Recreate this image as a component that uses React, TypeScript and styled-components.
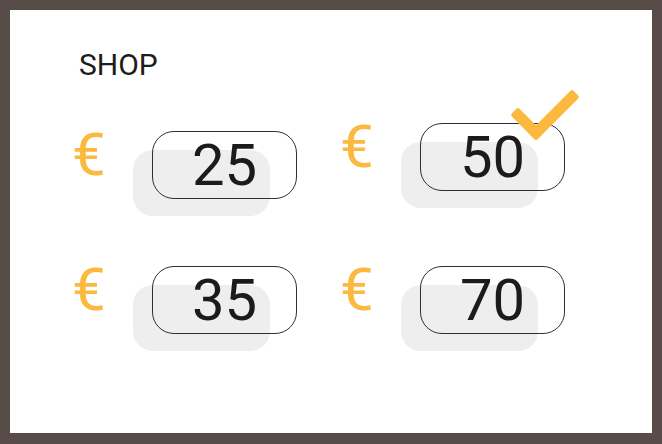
import React, { useState } from 'react';
import styled, { createGlobalStyle } from 'styled-components';

const GlobalStyle = createGlobalStyle`
  html, body {
    margin: 0;
    padding: 0;
    background: #574c48;
  }
  * {
    box-sizing: border-box;
  }
`;

const amounts = [25, 50, 35, 70];

const ShopPage = () => {
  const [selected, setSelected] = useState<number>(50);

  return (
    <Frame>
      <GlobalStyle />
      <Sheet>
        <Title>SHOP</Title>
        <Grid>
          {amounts.map((amount) => (
            <Cell key={amount} $selected={selected === amount} onClick={() => setSelected(amount)}>
              <Euro>€</Euro>
              <PillWrap>
                <Pill>{amount}</Pill>
                {selected === amount && <CheckMark />}
              </PillWrap>
            </Cell>
          ))}
        </Grid>
      </Sheet>
    </Frame>
  );
};

const CheckMark = () => (
  <CheckSvg width="80" height="60" viewBox="0 0 80 60">
    <rect x={21 - 18.25} y={39 - 5.5} width={36.5} height={11} rx={2.5} fill="#fcb940" transform="rotate(45 21 39)" />
    <rect x={48 - 30.95} y={30 - 5.5} width={61.9} height={11} rx={2.5} fill="#fcb940" transform="rotate(-45 48 30)" />
  </CheckSvg>
);

const Frame = styled.div`
  width: 662px;
  height: 444px;
  border: 10px solid #574c48;
  border-bottom-width: 11px;
  background: #574c48;
`;

const Sheet = styled.div`
  width: 100%;
  height: 100%;
  background: #ffffff;
  padding: 40px 0 0 62px;
  font-family: Roboto, 'Liberation Sans', sans-serif;
`;

const Title = styled.h1`
  margin: 0 0 51px 7px;
  font-size: 30px;
  line-height: 30px;
  font-weight: 400;
  color: #1c1c1c;
`;

const Grid = styled.div`
  display: grid;
  grid-template-columns: 225px 225px;
  column-gap: 43px;
  row-gap: 67px;
`;

const Cell = styled.div<{ $selected: boolean }>`
  display: flex;
  align-items: flex-start;
  height: 68px;
  cursor: pointer;
  transform: ${(p) => (p.$selected ? 'translateY(-8px)' : 'none')};
`;

const Euro = styled.span`
  width: 40px;
  margin-top: -6px;
  font-size: 60px;
  line-height: 1;
  color: #fcb940;
`;

const PillWrap = styled.div`
  position: relative;
  z-index: 0;
  margin-left: 40px;

  &::before {
    content: '';
    position: absolute;
    left: -19px;
    top: 19px;
    width: 137px;
    height: 66px;
    border-radius: 20px;
    background: #eeeeee;
    z-index: -1;
  }
`;

const Pill = styled.div`
  width: 145px;
  height: 68px;
  border: 1px solid #2e2e3c;
  border-radius: 22px;
  display: flex;
  align-items: center;
  justify-content: center;
  font-size: 58px;
  line-height: 1;
  color: #1b1b1b;
`;

const CheckSvg = styled.svg`
  position: absolute;
  left: 86px;
  top: -38px;
`;

export default ShopPage;
